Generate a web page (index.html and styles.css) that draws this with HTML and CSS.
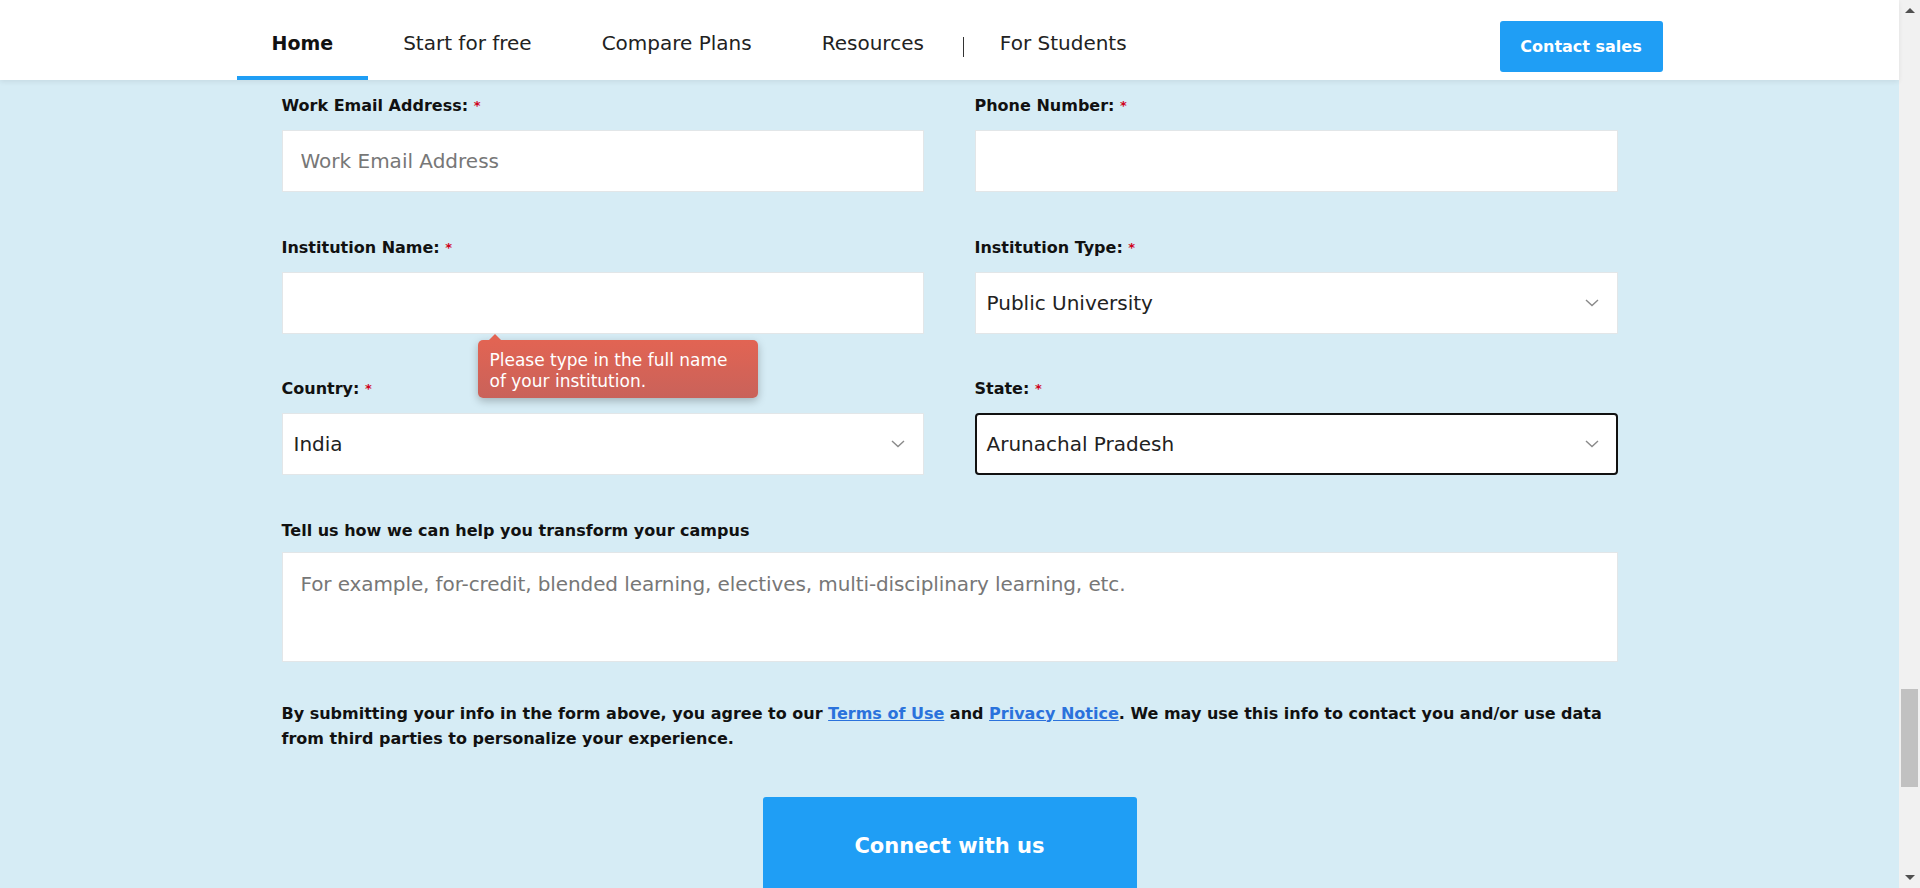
FILE: index.html
```html
<!DOCTYPE html>
<html lang="en">
<head>
<meta charset="utf-8">
<title>Connect with us</title>
<link rel="stylesheet" href="styles.css">
</head>
<body>
<div class="viewport">
  <div class="page">
    <header class="topbar">
      <div class="topbar-inner">
        <nav class="nav">
          <a class="nav-item active" href="#">Home</a>
          <a class="nav-item" href="#">Start for free</a>
          <a class="nav-item" href="#">Compare Plans</a>
          <a class="nav-item" href="#">Resources</a>
          <span class="nav-sep"></span>
          <a class="nav-item" href="#">For Students</a>
        </nav>
        <a class="btn-contact" href="#">Contact sales</a>
      </div>
    </header>

    <main class="content">
      <form class="form">
        <div class="grid">
          <div class="field">
            <label class="label">Work Email Address: <span class="req">*</span></label>
            <input class="control" type="email" placeholder="Work Email Address">
          </div>
          <div class="field">
            <label class="label">Phone Number: <span class="req">*</span></label>
            <input class="control" type="tel">
          </div>

          <div class="field field-tip">
            <label class="label">Institution Name: <span class="req">*</span></label>
            <input class="control" type="text">
            <div class="tooltip">Please type in the full name<br>of your institution.</div>
          </div>
          <div class="field">
            <label class="label">Institution Type: <span class="req">*</span></label>
            <div class="select">
              <span class="select-value">Public University</span>
              <svg class="chev" width="14" height="8" viewBox="0 0 14 8"><polyline points="1,1 7,6.5 13,1" fill="none" stroke="#8a8a8a" stroke-width="1.4"/></svg>
            </div>
          </div>

          <div class="field">
            <label class="label">Country: <span class="req">*</span></label>
            <div class="select">
              <span class="select-value">India</span>
              <svg class="chev" width="14" height="8" viewBox="0 0 14 8"><polyline points="1,1 7,6.5 13,1" fill="none" stroke="#8a8a8a" stroke-width="1.4"/></svg>
            </div>
          </div>
          <div class="field">
            <label class="label">State: <span class="req">*</span></label>
            <div class="select select-focus">
              <span class="select-value">Arunachal Pradesh</span>
              <svg class="chev" width="14" height="8" viewBox="0 0 14 8"><polyline points="1,1 7,6.5 13,1" fill="none" stroke="#8a8a8a" stroke-width="1.4"/></svg>
            </div>
          </div>

          <div class="field field-wide">
            <label class="label label-tight">Tell us how we can help you transform your campus</label>
            <textarea class="control area" placeholder="For example, for-credit, blended learning, electives, multi-disciplinary learning, etc."></textarea>
          </div>
        </div>

        <p class="disclaimer">By submitting your info in the form above, you agree to our <a href="#">Terms of Use</a> and <a href="#">Privacy Notice</a>. We may use this info to contact you and/or use data from third parties to personalize your experience.</p>

        <div class="actions">
          <button class="btn-submit" type="button">Connect with us</button>
        </div>
      </form>
    </main>
  </div>

  <div class="scrollbar">
    <div class="sb-btn"><span class="sb-up"></span></div>
    <div class="sb-track"><div class="sb-thumb" style="margin-top:668px;height:98px"></div></div>
    <div class="sb-btn"><span class="sb-down"></span></div>
  </div>
</div>
</body>
</html>
```

FILE: styles.css
```css
* { box-sizing: border-box; }

html, body {
  margin: 0;
  padding: 0;
  height: 100%;
  overflow: hidden;
}

body {
  font-family: "DejaVu Sans", "Noto Sans", sans-serif;
  color: #111;
  background: #d6ecf5;
}

.viewport {
  display: flex;
  height: 888px;
}

.page {
  flex: 1;
  display: flex;
  flex-direction: column;
  background: #d6ecf5;
  min-width: 0;
}

/* ---------- top bar ---------- */
.topbar {
  position: relative;
  z-index: 2;
  height: 80px;
  background: #fff;
  box-shadow: 0 2px 5px rgba(0, 0, 0, 0.07);
  flex: none;
}

.topbar-inner {
  width: 1426px;
  margin: 0 auto;
  height: 100%;
  display: flex;
  align-items: stretch;
  justify-content: space-between;
}

.nav {
  display: flex;
  align-items: center;
  height: 100%;
}

.nav-item {
  height: 100%;
  display: flex;
  align-items: center;
  padding: 10px 35px 0;
  font-size: 20px;
  color: #222;
  text-decoration: none;
  border-bottom: 4px solid transparent;
}

.nav-item.active {
  font-size: 19px;
  font-weight: bold;
  color: #111;
  border-bottom-color: #1f9ef5;
}

.nav-sep {
  width: 1px;
  height: 20px;
  margin: 14px 1px 0 4px;
  background: #333;
}

.btn-contact {
  align-self: center;
  margin-top: 12px;
  height: 51px;
  width: 163px;
  display: flex;
  align-items: center;
  justify-content: center;
  background: #1f9ef5;
  color: #fff;
  font-weight: bold;
  font-size: 16px;
  text-decoration: none;
  border-radius: 3px;
}

/* ---------- form ---------- */
.content {
  flex: 1;
  padding-top: 16px;
}

.form {
  width: 1336px;
  margin: 0 auto;
}

.grid {
  display: grid;
  grid-template-columns: 642px 643px;
  column-gap: 51px;
  row-gap: 45.5px;
}

.field {
  display: flex;
  flex-direction: column;
}

.field-tip {
  position: relative;
}

.field-wide {
  grid-column: 1 / -1;
}

.label {
  height: 20px;
  line-height: 20px;
  font-size: 16px;
  font-weight: bold;
  color: #111;
  margin-bottom: 14px;
  white-space: nowrap;
}

.label-tight {
  margin-bottom: 11px;
}

.req {
  color: #d0021b;
  font-size: 13px;
  vertical-align: 1px;
}

.control {
  height: 62px;
  width: 100%;
  border: 1px solid #e2e6e8;
  background: #fff;
  padding: 0 18px;
  font-family: inherit;
  font-size: 20px;
  color: #222;
  outline: none;
  border-radius: 0;
}

.control::placeholder {
  color: #777;
}

.area {
  height: 110px;
  resize: none;
  padding-top: 19px;
  line-height: 24px;
  letter-spacing: -0.1px;
}

.select {
  height: 62px;
  display: flex;
  align-items: center;
  background: #fff;
  border: 1px solid #e2e6e8;
  padding: 0 18px 0 11px;
  font-size: 20px;
  color: #222;
}

.select-focus {
  border: 2px solid #111;
  border-radius: 4px;
  padding-left: 10px;
  padding-right: 17px;
}

.chev {
  margin-left: auto;
  flex: none;
}

/* tooltip */
.tooltip {
  position: absolute;
  left: 196px;
  top: 102px;
  width: 280px;
  height: 58px;
  padding: 10px 12px 0;
  font-size: 17px;
  line-height: 21px;
  color: #fff;
  background: linear-gradient(#e26453, #c9625a);
  border-radius: 5px;
  box-shadow: 0 3px 8px rgba(0, 0, 0, 0.25);
  z-index: 3;
  white-space: nowrap;
}

.tooltip::before {
  content: "";
  position: absolute;
  left: 11px;
  top: -6px;
  border-left: 6px solid transparent;
  border-right: 6px solid transparent;
  border-bottom: 6px solid #e26453;
}

.disclaimer {
  margin: 39px 0 0;
  font-size: 16px;
  font-weight: bold;
  line-height: 25px;
  color: #111;
}

.disclaimer a {
  color: #2a72dc;
  text-decoration: underline;
}

.actions {
  display: flex;
  justify-content: center;
  margin-top: 46px;
}

.btn-submit {
  width: 374px;
  height: 94px;
  border: none;
  border-radius: 3px 3px 0 0;
  background: #1f9ef5;
  color: #fff;
  font-family: inherit;
  font-weight: bold;
  font-size: 21px;
  padding: 4px 0 0;
}

/* ---------- scrollbar ---------- */
.scrollbar {
  width: 21px;
  flex: none;
  background: #f1f1f1;
  display: flex;
  flex-direction: column;
}

.sb-btn {
  height: 21px;
  display: flex;
  align-items: center;
  justify-content: center;
  flex: none;
}

.sb-up {
  border-left: 5px solid transparent;
  border-right: 5px solid transparent;
  border-bottom: 5px solid #505050;
}

.sb-down {
  border-left: 5px solid transparent;
  border-right: 5px solid transparent;
  border-top: 5px solid #505050;
}

.sb-track {
  flex: 1;
  display: flex;
  flex-direction: column;
  align-items: center;
}

.sb-thumb {
  width: 17px;
  background: #c1c1c1;
}
```
